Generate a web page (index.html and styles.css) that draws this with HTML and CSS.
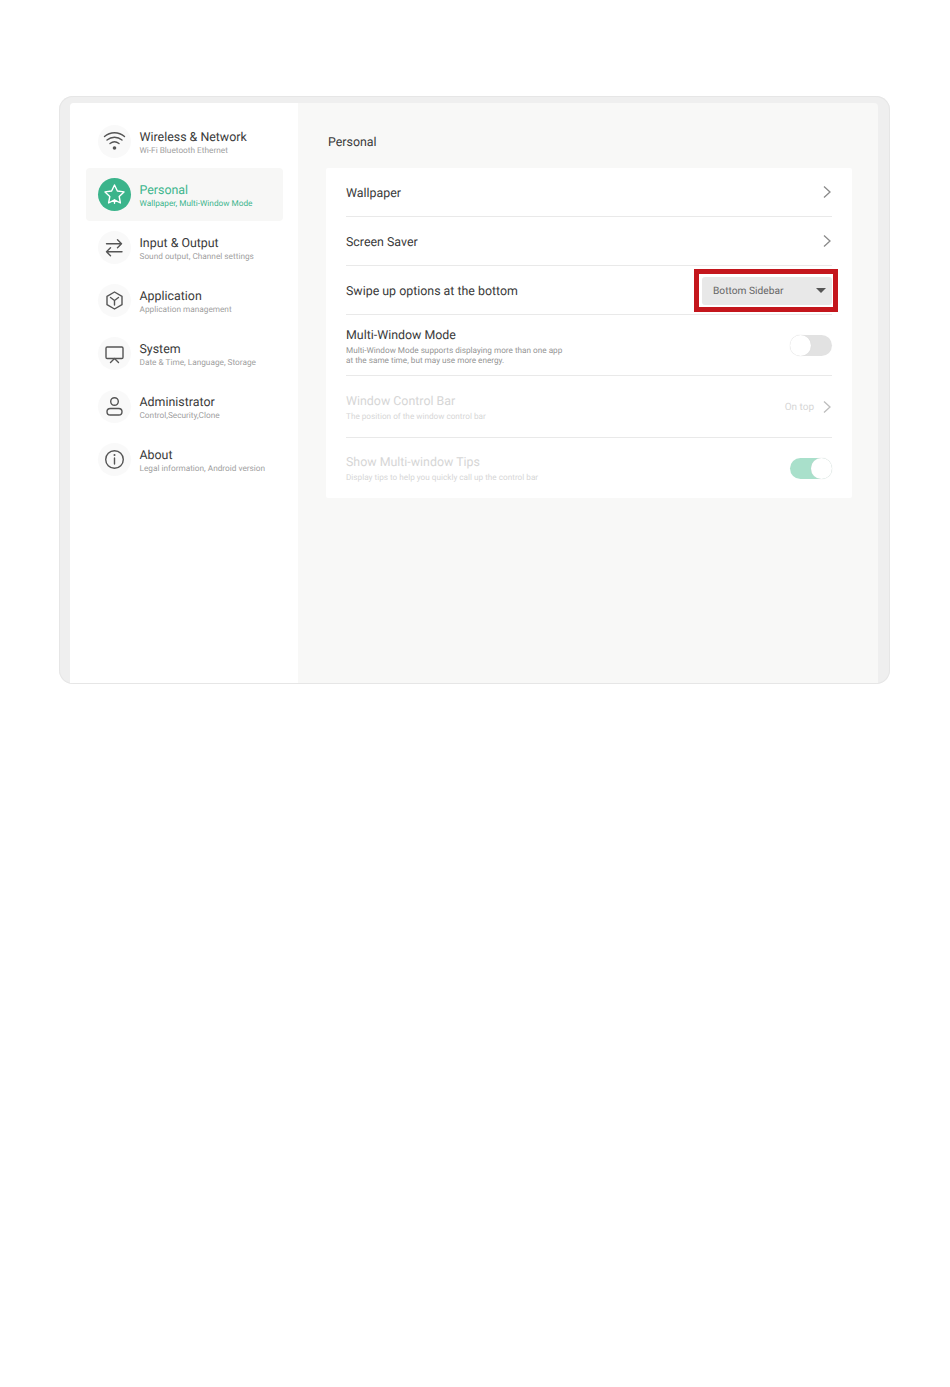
FILE: index.html
```html
<!DOCTYPE html>
<html lang="en">
<head>
<meta charset="utf-8">
<title>Personal settings</title>
<link rel="stylesheet" href="styles.css">
</head>
<body>
<div class="frame">
  <div class="screen">
    <nav class="sidebar">
      <div class="nav-item">
        <span class="nav-icon"><svg viewBox="0 0 33 33" class="ico"><path d="M6.500 11.500c5.800-5 14.200-5 20 0M9 15c4.400-3.600 10.600-3.600 15 0M12 18.500c2.700-2 6.300-2 9 0"/><circle cx="16.500" cy="23" r="1.800" class="solid"/></svg></span>
        <span class="nav-text"><span class="nav-title">Wireless &amp; Network</span><span class="nav-sub">Wi-Fi Bluetooth Ethernet</span></span>
      </div>
      <div class="nav-item active">
        <span class="nav-icon"><svg viewBox="0 0 33 33" class="ico"><path d="M16.500 7l2.900 6 6.600.9-4.800 4.600 1.200 6.500-5.900-3.200-5.900 3.200 1.200-6.500-4.800-4.600 6.600-.9zM16.500 21.800v3.400"/></svg></span>
        <span class="nav-text"><span class="nav-title">Personal</span><span class="nav-sub">Wallpaper, Multi-Window Mode</span></span>
      </div>
      <div class="nav-item">
        <span class="nav-icon"><svg viewBox="0 0 33 33" class="ico"><path d="M8.500 12.700h15M19.500 8.700l4 4-4 4M24 20.800H8.500M12.500 16.800l-4 4 4 4"/></svg></span>
        <span class="nav-text"><span class="nav-title">Input &amp; Output</span><span class="nav-sub">Sound output, Channel settings</span></span>
      </div>
      <div class="nav-item">
        <span class="nav-icon"><svg viewBox="0 0 33 33" class="ico"><path d="M16.500 8l7.500 4.300v8.400L16.500 25 9 20.700v-8.400zM12.500 13.500l4 3 4-3M16.500 16.500v4.500"/></svg></span>
        <span class="nav-text"><span class="nav-title">Application</span><span class="nav-sub">Application management</span></span>
      </div>
      <div class="nav-item">
        <span class="nav-icon"><svg viewBox="0 0 33 33" class="ico"><rect x="8" y="10" width="17" height="11.500" rx="1.200"/><path d="M12.500 25.500l4-4 4 4"/></svg></span>
        <span class="nav-text"><span class="nav-title">System</span><span class="nav-sub">Date &amp; Time, Language, Storage</span></span>
      </div>
      <div class="nav-item">
        <span class="nav-icon"><svg viewBox="0 0 33 33" class="ico"><circle cx="16.500" cy="11.500" r="3.800"/><rect x="9" y="18.500" width="15" height="6.500" rx="3.250"/></svg></span>
        <span class="nav-text"><span class="nav-title">Administrator</span><span class="nav-sub">Control,Security,Clone</span></span>
      </div>
      <div class="nav-item">
        <span class="nav-icon"><svg viewBox="0 0 33 33" class="ico"><circle cx="16.500" cy="16.500" r="8.800"/><path d="M16.500 15v6"/><circle cx="16.500" cy="12" r="1" class="solid"/></svg></span>
        <span class="nav-text"><span class="nav-title">About</span><span class="nav-sub">Legal information, Android version</span></span>
      </div>
    </nav>
    <main class="content">
      <h1 class="page-title">Personal</h1>
      <section class="card">
        <div class="row row-short">
          <span class="row-title">Wallpaper</span>
          <svg viewBox="0 0 10 14" class="chev"><path d="M2 1.500L8 7l-6 5.500"/></svg>
        </div>
        <div class="row row-short">
          <span class="row-title">Screen Saver</span>
          <svg viewBox="0 0 10 14" class="chev"><path d="M2 1.500L8 7l-6 5.500"/></svg>
        </div>
        <div class="row row-short">
          <span class="row-title">Swipe up options at the bottom</span>
          <div class="select">
            <span class="select-label">Bottom Sidebar</span>
            <span class="caret"></span>
            <span class="callout"></span>
          </div>
        </div>
        <div class="row row-mode">
          <div class="row-text">
            <span class="row-title">Multi-Window Mode</span>
            <span class="row-sub">Multi-Window Mode supports displaying more than one app<br>at the same time, but may use more energy.</span>
          </div>
          <span class="toggle"><span class="knob"></span></span>
        </div>
        <div class="row row-bar disabled">
          <div class="row-text">
            <span class="row-title">Window Control Bar</span>
            <span class="row-sub">The position of the window control bar</span>
          </div>
          <div class="row-value">
            <span>On top</span>
            <svg viewBox="0 0 10 14" class="chev"><path d="M2 1.500L8 7l-6 5.500"/></svg>
          </div>
        </div>
        <div class="row row-tips disabled">
          <div class="row-text">
            <span class="row-title">Show Multi-window Tips</span>
            <span class="row-sub">Display tips to help you quickly call up the control bar</span>
          </div>
          <span class="toggle on"><span class="knob"></span></span>
        </div>
      </section>
    </main>
  </div>
</div>
</body>
</html>
```
FILE: styles.css
```css
* { box-sizing: border-box; }
html, body { margin: 0; padding: 0; background: #fff; }
body { width: 950px; height: 1387px; padding: 96px 60px 0 59px; font-family: Roboto, "Liberation Sans", sans-serif; color: #3a3a3a; text-rendering: geometricPrecision; }

.frame {
  width: 831px;
  height: 588px;
  padding: 7px 12px 1px 11px;
  background: #efefef;
  border-radius: 14px;
  box-shadow: inset 0 0 0 1px #e6e6e6;
}
.screen { display: flex; height: 580px; background: #f8f8f7; border-radius: 4px 4px 0 0; overflow: hidden; }

.sidebar { width: 228px; flex: none; padding: 12px 15px 0 16px; background: #fff; }
.nav-item { display: flex; align-items: center; gap: 8.500px; height: 53px; padding-left: 12px; border-radius: 4px; }
.nav-item.active { background: #f7f7f6; color: #3db58d; }
.nav-icon { width: 33px; height: 33px; flex: none; border-radius: 50%; background: #f9f9f9; }
.active .nav-icon { background: #3bb48b; }
.ico { display: block; width: 33px; height: 33px; fill: none; stroke: #555; stroke-width: 1.400; stroke-linecap: round; stroke-linejoin: round; }
.ico .solid { fill: #555; stroke: none; }
.active .ico { stroke: #fff; }
.nav-text { display: flex; flex-direction: column; padding-top: 4px; }
.nav-title { font-size: 12.400px; line-height: 15px; }
.nav-sub { margin-top: 1px; font-size: 8.250px; line-height: 11px; color: #a0a0a0; }
.active .nav-sub { color: #3db58d; }

.content { flex: 1; padding: 32px 26px 0 28px; }
.page-title { margin: 0 0 17px 2px; font-size: 12.400px; line-height: 16px; font-weight: 400; }

.card { background: #fff; padding: 0 20px; border-radius: 2px; }
.row { position: relative; display: flex; align-items: center; justify-content: space-between; border-bottom: 1px solid #e9e9e9; }
.row-short { height: 49px; }
.row-short .row-title { padding-top: 3px; }
.row-mode { height: 61px; }
.row-bar { height: 62px; }
.row-tips { height: 60px; border-bottom: 0; }
.row-title { padding-top: 1px; font-size: 12.400px; line-height: 15px; }
.row-text { display: flex; flex-direction: column; }
.row-mode .row-text { padding-top: 3px; }
.row-bar .row-text { padding-top: 2px; }
.row-tips .row-text { padding-top: 2px; }
.row-sub { margin-top: 4px; font-size: 8.200px; line-height: 9.500px; color: #949494; }
.disabled .row-title, .disabled .row-sub, .disabled .row-value { color: #d6d6d6; }
.row-value { display: flex; align-items: center; gap: 8px; padding-top: 1px; font-size: 10px; }
.chev { display: block; width: 10px; height: 14px; fill: none; stroke: #8a8a8a; stroke-width: 1.300; }
.disabled .chev { stroke: #bdbdbd; }

.select { position: relative; display: flex; align-items: center; justify-content: space-between; width: 130px; height: 28px; margin-top: 1px; padding: 0 6px 0 11px; background: #e8e8e8; border-radius: 3px; font-size: 10.200px; color: #666; }
.select-label { padding-top: 1px; }
.caret { width: 0; height: 0; border-left: 5px solid transparent; border-right: 5px solid transparent; border-top: 5px solid #555; }
.callout { position: absolute; left: -8px; top: -8px; width: 144px; height: 43px; border: 5px solid #c4161c; }

.toggle { position: relative; display: block; width: 42px; height: 21px; border-radius: 11px; background: #e2e2e2; }
.knob { position: absolute; left: 0; top: 0; width: 21px; height: 21px; border-radius: 50%; background: #fff; box-shadow: 0 0 1px #cfcfcf; }
.toggle.on { background: #a9e0cb; }
.toggle.on .knob { left: 21px; }
```
